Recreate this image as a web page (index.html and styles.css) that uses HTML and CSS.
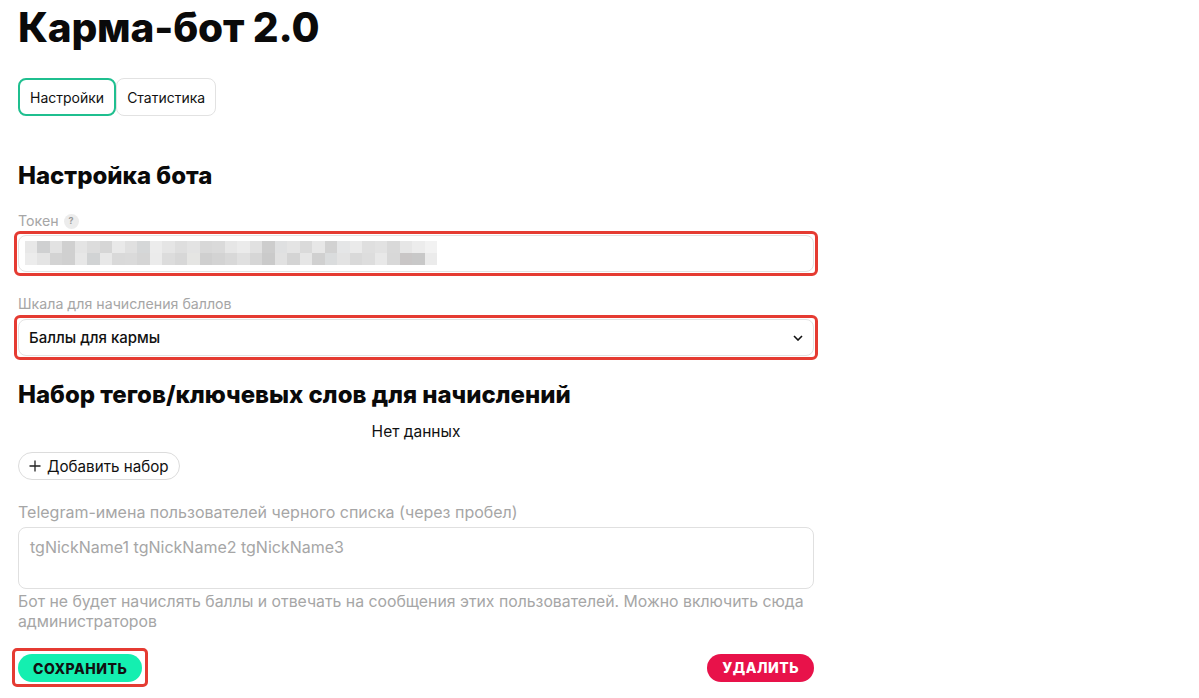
FILE: index.html
```html
<!DOCTYPE html>
<html lang="ru">
<head>
  <meta charset="UTF-8">
  <title>Карма-бот 2.0</title>
  <link rel="stylesheet" href="styles.css">
</head>
<body>
  <div class="page">
    <h1 class="title">Карма-бот 2.0</h1>

    <div class="tabs">
      <button class="tab tab-active">Настройки</button>
      <button class="tab">Статистика</button>
    </div>

    <h2 class="section-title">Настройка бота</h2>

    <div class="field token-field">
      <label class="field-label">Токен <span class="hint">?</span></label>
      <div class="mark">
        <div class="input token">
          <svg width="420" height="25" viewBox="0 0 420 25">
            <g>
              <rect x="0" y="0" width="12" height="12" fill="#e8e8e8"/>
              <rect x="12" y="0" width="13" height="12" fill="#cfd0d1"/>
              <rect x="25" y="0" width="12" height="12" fill="#e2e2e2"/>
              <rect x="37" y="0" width="13" height="12" fill="#d0d0d0"/>
              <rect x="50" y="0" width="12" height="12" fill="#e4e4e4"/>
              <rect x="62" y="0" width="13" height="12" fill="#dcdcdc"/>
              <rect x="75" y="0" width="12" height="12" fill="#d6d6d6"/>
              <rect x="87" y="0" width="13" height="12" fill="#e9e9e9"/>
              <rect x="100" y="0" width="12" height="12" fill="#e0e0e0"/>
              <rect x="112" y="0" width="13" height="12" fill="#d5d7d8"/>
              <rect x="125" y="0" width="12" height="12" fill="#ececec"/>
              <rect x="137" y="0" width="13" height="12" fill="#e5e5e5"/>
              <rect x="150" y="0" width="12" height="12" fill="#dedede"/>
              <rect x="162" y="0" width="13" height="12" fill="#e3e3e3"/>
              <rect x="175" y="0" width="12" height="12" fill="#d8d8d8"/>
              <rect x="187" y="0" width="13" height="12" fill="#dadada"/>
              <rect x="200" y="0" width="12" height="12" fill="#e6e6e6"/>
              <rect x="212" y="0" width="13" height="12" fill="#ebebeb"/>
              <rect x="225" y="0" width="12" height="12" fill="#e1e1e1"/>
              <rect x="237" y="0" width="13" height="12" fill="#cdcdcd"/>
              <rect x="250" y="0" width="12" height="12" fill="#dfe0e1"/>
              <rect x="262" y="0" width="13" height="12" fill="#e4e4e4"/>
              <rect x="275" y="0" width="12" height="12" fill="#dadada"/>
              <rect x="287" y="0" width="13" height="12" fill="#e7e7e7"/>
              <rect x="300" y="0" width="12" height="12" fill="#d2d2d2"/>
              <rect x="312" y="0" width="13" height="12" fill="#e5e6e7"/>
              <rect x="325" y="0" width="12" height="12" fill="#eaeaea"/>
              <rect x="337" y="0" width="13" height="12" fill="#dfdfdf"/>
              <rect x="350" y="0" width="12" height="12" fill="#e2e2e2"/>
              <rect x="362" y="0" width="13" height="12" fill="#d9d9d9"/>
              <rect x="375" y="0" width="12" height="12" fill="#e6e6e6"/>
              <rect x="387" y="0" width="13" height="12" fill="#ececec"/>
              <rect x="400" y="0" width="12" height="12" fill="#f2f2f2"/>
            </g>
            <g>
              <rect x="0" y="12" width="12" height="12" fill="#ececec"/>
              <rect x="12" y="12" width="13" height="12" fill="#e4e4e4"/>
              <rect x="25" y="12" width="12" height="12" fill="#d3d3d3"/>
              <rect x="37" y="12" width="13" height="12" fill="#d0d0d0"/>
              <rect x="50" y="12" width="12" height="12" fill="#e7e7e7"/>
              <rect x="62" y="12" width="13" height="12" fill="#d1d3d4"/>
              <rect x="75" y="12" width="12" height="12" fill="#e8e8e8"/>
              <rect x="87" y="12" width="13" height="12" fill="#d9d9d9"/>
              <rect x="100" y="12" width="12" height="12" fill="#dadada"/>
              <rect x="112" y="12" width="13" height="12" fill="#d5d5d5"/>
              <rect x="125" y="12" width="12" height="12" fill="#ebebeb"/>
              <rect x="137" y="12" width="13" height="12" fill="#dcdcdc"/>
              <rect x="150" y="12" width="12" height="12" fill="#d7d7d7"/>
              <rect x="162" y="12" width="13" height="12" fill="#e5e5e3"/>
              <rect x="175" y="12" width="12" height="12" fill="#cfcfcf"/>
              <rect x="187" y="12" width="13" height="12" fill="#d3d3d3"/>
              <rect x="200" y="12" width="12" height="12" fill="#d8d8d8"/>
              <rect x="212" y="12" width="13" height="12" fill="#e0e0e0"/>
              <rect x="225" y="12" width="12" height="12" fill="#d6d6d6"/>
              <rect x="237" y="12" width="13" height="12" fill="#cacaca"/>
              <rect x="250" y="12" width="12" height="12" fill="#e1e1e1"/>
              <rect x="262" y="12" width="13" height="12" fill="#d4d4d4"/>
              <rect x="275" y="12" width="12" height="12" fill="#e6e6e6"/>
              <rect x="287" y="12" width="13" height="12" fill="#d0d0d0"/>
              <rect x="300" y="12" width="12" height="12" fill="#dadcdd"/>
              <rect x="312" y="12" width="13" height="12" fill="#e3e3e3"/>
              <rect x="325" y="12" width="12" height="12" fill="#d9d9d9"/>
              <rect x="337" y="12" width="13" height="12" fill="#dddddd"/>
              <rect x="350" y="12" width="12" height="12" fill="#e8e8e8"/>
              <rect x="362" y="12" width="13" height="12" fill="#d8d8d8"/>
              <rect x="375" y="12" width="12" height="12" fill="#c9c6c6"/>
              <rect x="387" y="12" width="13" height="12" fill="#c8c8c8"/>
              <rect x="400" y="12" width="12" height="12" fill="#ebebeb"/>
            </g>
          </svg>
        </div>
      </div>
    </div>

    <div class="field scale-field">
      <label class="field-label">Шкала для начисления баллов</label>
      <div class="mark">
        <div class="input select">
          <span>Баллы для кармы</span>
          <svg class="chevron" width="10" height="6" viewBox="0 0 10 6">
            <path d="M1 1 L5 5 L9 1" fill="none" stroke="#111" stroke-width="1.6"/>
          </svg>
        </div>
      </div>
    </div>

    <h2 class="section-title tags-title">Набор тегов/ключевых слов для начислений</h2>
    <div class="empty">Нет данных</div>
    <button class="add-btn">
      <svg width="12" height="12" viewBox="0 0 12 12">
        <path d="M6 0.5 V11.5 M0.5 6 H11.5" stroke="#222" stroke-width="1.3"/>
      </svg>
      Добавить набор
    </button>

    <div class="field blacklist">
      <label class="field-label field-label-lg">Telegram-имена пользователей черного списка (через пробел)</label>
      <div class="textarea">tgNickName1 tgNickName2 tgNickName3</div>
      <p class="help">Бот не будет начислять баллы и отвечать на сообщения этих пользователей. Можно включить сюда администраторов</p>
    </div>

    <div class="actions">
      <div class="mark mark-btn">
        <button class="btn btn-save">СОХРАНИТЬ</button>
      </div>
      <button class="btn btn-delete">УДАЛИТЬ</button>
    </div>
  </div>
</body>
</html>
```

FILE: styles.css
```css
body {
  margin: 0;
  font-family: Inter, "Noto Sans", sans-serif;
  color: #111;
  background: #fff;
}
.page {
  width: 796px;
  padding: 0 0 0 18px;
}
.title {
  margin: 0;
  padding-top: 4px;
  font-size: 40.6px;
  font-weight: 800;
  line-height: 48px;
  letter-spacing: -0.2px;
  color: #0a0a0a;
}
.tabs {
  display: flex;
  margin-top: 26px;
}
.tab {
  font-family: inherit;
  font-size: 14px;
  color: #111;
  background: #fff;
  height: 38px;
  padding: 0 10px;
  border: 1px solid #e2e2e2;
  border-radius: 8px;
  cursor: pointer;
}
.tab-active {
  border: 2px solid #1fbf8f;
  padding: 0 10px;
}
.section-title {
  margin: 44px 0 0;
  font-size: 24px;
  font-weight: 800;
  line-height: 32px;
  color: #0a0a0a;
}
.field {
  margin-top: 18px;
}
.token-field {
  margin-top: 20px;
}
.scale-field {
  margin-top: 19px;
}
.field-label {
  display: flex;
  align-items: center;
  gap: 5px;
  font-size: 14.2px;
  color: #a6a6a6;
  line-height: 18px;
  margin-bottom: 1px;
}
.scale-field .field-label {
  margin-bottom: 2px;
}
.field-label-lg {
  font-size: 16px;
  line-height: 20px;
  margin-bottom: 5px;
}
.hint {
  display: inline-flex;
  align-items: center;
  justify-content: center;
  width: 15px;
  height: 15px;
  border-radius: 50%;
  background: #ececec;
  color: #9a9a9a;
  font-size: 9px;
  font-weight: 700;
}
.mark {
  margin-left: -4px;
  margin-right: -4px;
  border: 3px solid #e53b32;
  border-radius: 6px;
  padding: 1px;
}
.input {
  height: 35px;
  border: 1px solid #e3e3e3;
  border-radius: 8px;
  display: flex;
  align-items: center;
  padding: 0 6px;
}
.token svg {
  display: block;
}
.select {
  justify-content: space-between;
  padding: 0 10px 0 10px;
  font-size: 15px;
  font-weight: 500;
}
.tags-title {
  margin-top: 19px;
}
.empty {
  text-align: center;
  font-size: 15.5px;
  margin-top: 10px;
  line-height: 22px;
}
.add-btn {
  display: inline-flex;
  align-items: center;
  gap: 6px;
  margin-top: 9px;
  height: 28px;
  padding: 0 10px;
  font-family: inherit;
  font-size: 15.2px;
  color: #111;
  background: #fff;
  border: 1px solid #dcdcdc;
  border-radius: 14px;
}
.blacklist {
  margin-top: 22px;
}
.textarea {
  height: 62px;
  box-sizing: border-box;
  border: 1px solid #e0e0e0;
  border-radius: 8px;
  padding: 9px 11px;
  font-size: 16px;
  color: #a6a6a6;
  line-height: 20px;
}
.help {
  margin: 3px 0 0;
  font-size: 15.8px;
  line-height: 20px;
  color: #a6a6a6;
}
.actions {
  display: flex;
  justify-content: space-between;
  align-items: center;
  margin-top: 16px;
}
.mark-btn {
  margin-left: -6px;
  margin-right: 0;
  padding: 3px 3px 2px;
  border-radius: 5px;
}
.btn {
  height: 28px;
  border: none;
  border-radius: 14px;
  font-family: inherit;
  font-size: 14px;
  font-weight: 800;
  letter-spacing: 0.5px;
  padding: 0 15px;
  cursor: pointer;
}
.btn-save {
  background: #14efb0;
  color: #111;
}
.btn-delete {
  background: #e8124a;
  color: #fff;
}
```
